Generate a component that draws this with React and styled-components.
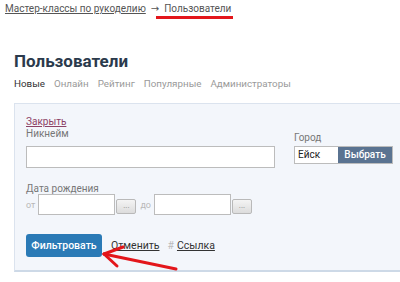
import React from 'react'
import styled, { createGlobalStyle } from 'styled-components'

const GlobalStyle = createGlobalStyle`
  html, body {
    margin: 0;
    padding: 0;
    background: #fff;
    overflow: hidden;
  }
  body {
    font-family: Roboto, 'Noto Sans', sans-serif;
    color: #333;
  }
`

const Page = styled.div`
  position: relative;
  width: 400px;
  height: 282px;
  overflow: hidden;
`

const Breadcrumbs = styled.div`
  display: flex;
  align-items: center;
  gap: 5px;
  padding: 0 0 0 5px;
  height: 17px;
  font-size: 10px;
  color: #555;
`

const Crumb = styled.a`
  color: #555;
  text-decoration: underline;
`

const ArrowGlyph = styled.span`
  font-family: 'DejaVu Sans', sans-serif;
  font-size: 10px;
  color: #555;
`

const Current = styled.span`
  position: relative;
  color: #555;
  &:after {
    content: '';
    position: absolute;
    left: -8px;
    right: -2px;
    bottom: -5px;
    height: 3px;
    background: #e3161b;
  }
`

const Main = styled.div`
  padding: 33px 0 0 14px;
`

const Title = styled.h1`
  margin: 0;
  font-size: 17px;
  line-height: 22px;
  font-weight: 700;
  color: #2b3a4c;
`

const Tabs = styled.div`
  display: flex;
  gap: 9px;
  margin-top: 5px;
  font-size: 9.8px;
  line-height: 14px;
`

const Tab = styled.span`
  color: ${(p) => (p.active ? '#333' : '#9a9a9a')};
`

const Panel = styled.div`
  margin-top: 12px;
  margin-right: -20px;
  background: #f3f6fb;
  border: 1px solid #dbe3ee;
  border-bottom: 2px solid #cdd9e7;
  padding: 12px 0 13px 11px;
`

const CloseLink = styled.a`
  display: block;
  font-size: 10px;
  color: #8c4266;
  text-decoration: underline;
  line-height: 12px;
`

const Row = styled.div`
  display: flex;
  align-items: flex-end;
  gap: 19px;
`

const Field = styled.div`
  display: flex;
  flex-direction: column;
`

const Label = styled.label`
  font-size: 10px;
  color: #777;
  line-height: 12px;
  margin-bottom: ${(p) => p.mb ?? 6}px;
`

const TextInput = styled.div`
  width: ${(p) => p.w}px;
  height: ${(p) => p.h || 22}px;
  background: #fff;
  border: 1px solid #bcbcbc;
  box-sizing: border-box;
`

const CityGroup = styled.div`
  display: flex;
  width: 99px;
  height: 18px;
  border: 1px solid #bcbcbc;
  box-sizing: border-box;
  background: #fff;
  margin-bottom: 4px;
`

const CityValue = styled.span`
  flex: 1;
  font-size: 10px;
  line-height: 16px;
  padding-left: 3px;
  color: #222;
`

const CityButton = styled.span`
  width: 54px;
  background: #5a7391;
  color: #fff;
  font-size: 10px;
  font-weight: 500;
  line-height: 16px;
  text-align: center;
`

const DateBlock = styled.div`
  margin-top: 9px;
`

const DateRow = styled.div`
  display: flex;
  align-items: center;
  margin-top: -2px;
`

const Small = styled.span`
  font-size: 9px;
  color: #b8b8b8;
  margin: ${(p) => p.m || '0 3px 0 0'};
`

const DotsButton = styled.span`
  width: 20px;
  height: 15px;
  margin-left: 1px;
  margin-top: 4px;
  border: 1px solid #b9b9b9;
  border-radius: 2px;
  box-sizing: border-box;
  background: linear-gradient(#f4f4f4, #dcdcdc);
  font-size: 8px;
  line-height: 11px;
  color: #888;
  text-align: center;
`

const Actions = styled.div`
  display: flex;
  align-items: center;
  margin-top: 19px;
  font-size: 10.5px;
`

const FilterButton = styled.button`
  width: 76px;
  height: 23px;
  padding: 0;
  border: none;
  border-radius: 3px;
  background: #2a7ab6;
  color: #fff;
  font-family: inherit;
  font-size: 10.5px;
  font-weight: 500;
`

const PlainLink = styled.a`
  color: #333;
  text-decoration: underline;
  margin-left: ${(p) => p.ml || 0}px;
`

const Hash = styled.span`
  color: #bbb;
  margin-left: 8px;
  margin-right: 3px;
`

const Arrow = styled.svg`
  position: absolute;
  left: 95px;
  top: 238px;
  pointer-events: none;
`

export default function App() {
  return (
    <Page>
      <GlobalStyle />
      <Breadcrumbs>
        <Crumb>Мастер-классы по рукоделию</Crumb>
        <ArrowGlyph>→</ArrowGlyph>
        <Current>Пользователи</Current>
      </Breadcrumbs>
      <Main>
        <Title>Пользователи</Title>
        <Tabs>
          <Tab active>Новые</Tab>
          <Tab>Онлайн</Tab>
          <Tab>Рейтинг</Tab>
          <Tab>Популярные</Tab>
          <Tab>Администраторы</Tab>
        </Tabs>
        <Panel>
          <CloseLink>Закрыть</CloseLink>
          <Row>
            <Field>
              <Label>Никнейм</Label>
              <TextInput w={249} />
            </Field>
            <Field>
              <Label mb={2}>Город</Label>
              <CityGroup>
                <CityValue>Ейск</CityValue>
                <CityButton>Выбрать</CityButton>
              </CityGroup>
            </Field>
          </Row>
          <DateBlock>
            <Label>Дата рождения</Label>
            <DateRow>
              <Small>от</Small>
              <TextInput w={77} h={21} />
              <DotsButton>...</DotsButton>
              <Small m="0 3px 0 4px">до</Small>
              <TextInput w={77} h={21} />
              <DotsButton>...</DotsButton>
            </DateRow>
          </DateBlock>
          <Actions>
            <FilterButton>Фильтровать</FilterButton>
            <PlainLink ml={9}>Отменить</PlainLink>
            <Hash>#</Hash>
            <PlainLink>Ссылка</PlainLink>
          </Actions>
        </Panel>
      </Main>
      <Arrow width="90" height="40" viewBox="0 0 90 40">
        <g stroke="#e3161b" strokeWidth="3" strokeLinecap="round" fill="none">
          <path d="M9 16 L81 31" />
          <path d="M9 16 L28 9" />
          <path d="M9 16 L22 28" />
        </g>
      </Arrow>
    </Page>
  )
}
